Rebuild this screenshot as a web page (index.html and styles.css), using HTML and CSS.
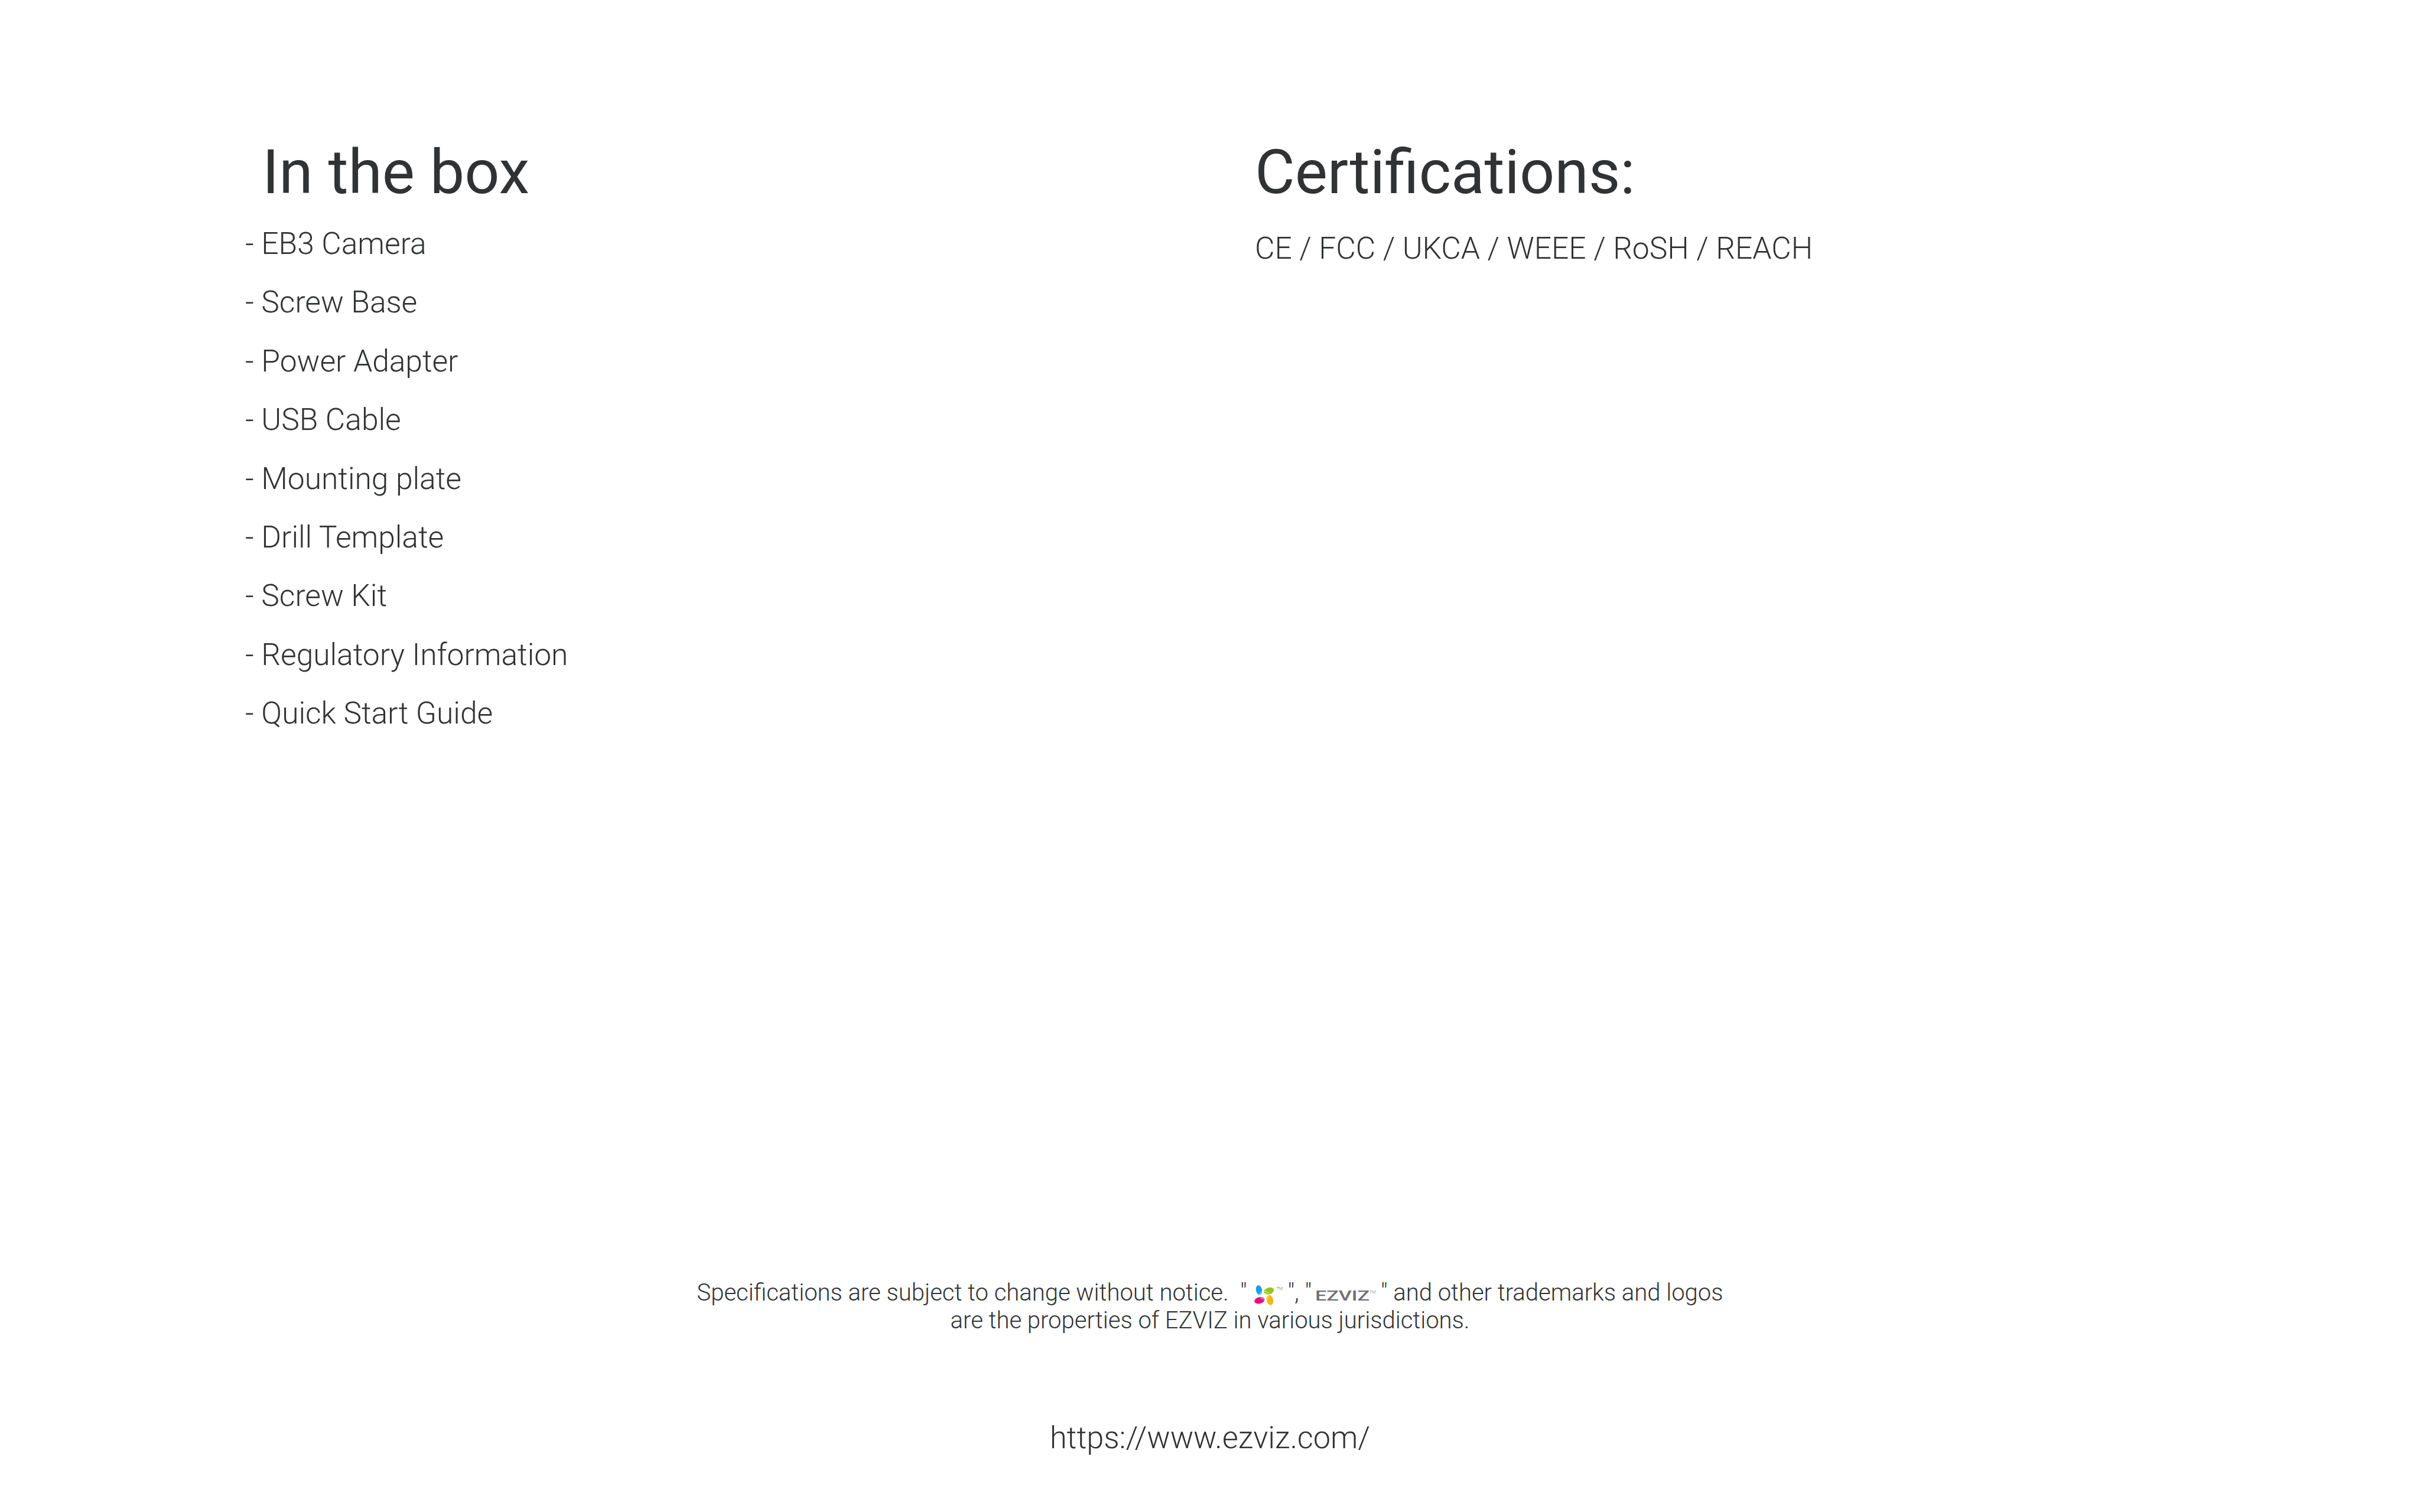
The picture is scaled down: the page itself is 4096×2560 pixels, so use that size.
FILE: index.html
```html
<!DOCTYPE html>
<html lang="en">
<head>
<meta charset="utf-8">
<title>In the box</title>
<link rel="stylesheet" href="styles.css">
</head>
<body>
<main class="page">
  <section class="columns">
    <div class="box">
      <h2 class="title title-box">In the box</h2>
      <ul class="list">
        <li>- EB3 Camera</li>
        <li>- Screw Base</li>
        <li>- Power Adapter</li>
        <li>- USB Cable</li>
        <li>- Mounting plate</li>
        <li>- Drill Template</li>
        <li>- Screw Kit</li>
        <li>- Regulatory Information</li>
        <li>- Quick Start Guide</li>
      </ul>
    </div>
    <div class="certs">
      <h2 class="title">Certifications:</h2>
      <p class="cert-text">CE / FCC / UKCA / WEEE / RoSH / REACH</p>
    </div>
  </section>
  <footer class="footer">
    <p class="note">Specifications are subject to change without notice. &nbsp;"<svg class="flower" viewBox="0 0 210 150"><ellipse cx="34" cy="35" rx="22" ry="35" fill="#1e9ee6" transform="rotate(-12 34 35)"/><ellipse cx="105" cy="42" rx="38" ry="24" fill="#97c31e" transform="rotate(-18 105 42)"/><ellipse cx="38" cy="110" rx="38" ry="24" fill="#e5127c" transform="rotate(-15 38 110)"/><ellipse cx="113" cy="108" rx="24" ry="37" fill="#f7b50f" transform="rotate(-15 113 108)"/><g fill="none" stroke="#fff" stroke-width="3.5"><path d="M40 72C42 54 52 42 68 38M52 74C52 63 58 54 69 50"/><path d="M68 46C84 40 98 46 106 64M70 60C80 55 90 59 96 70"/><path d="M34 86C50 80 66 88 74 106M46 96C54 93 62 98 66 106"/><path d="M100 74C104 88 98 106 86 116M90 72C92 84 88 94 82 102"/></g><text class="tm" x="162" y="36">TM</text></svg>", "<svg class="wordmark" viewBox="0 0 103 20"><text class="ezviz" x="0" y="19" transform="scale(1.38 1)">EZVIZ</text><text class="tm-grey" x="92" y="7">TM</text></svg>" and other trademarks and logos</p>
    <p class="note">are the properties of EZVIZ in various jurisdictions.</p>
    <p class="url">https://www.ezviz.com/</p>
  </footer>
</main>
</body>
</html>
```

FILE: styles.css
```css
* { box-sizing: border-box; }
html, body { margin: 0; padding: 0; background: #fff; }
body { font-family: Roboto, "Liberation Sans", sans-serif; color: #303233; }
.page { width: 4096px; height: 2560px; display: flex; flex-direction: column; overflow: hidden; }
.columns { display: grid; grid-template-columns: 1709px 1fr; padding: 222px 0 0 415px; }
.title { margin: 0; font-size: 104px; line-height: 140px; font-weight: 400; }
.title-box { padding-left: 29px; }
.list { list-style: none; margin: 1px 0 0; padding: 0; }
.list li { font-size: 51.5px; line-height: 99.4px; font-weight: 300; }
.cert-text { margin: 9px 0 0; font-size: 51.5px; line-height: 99.4px; font-weight: 300; }
.footer { margin-top: auto; padding-bottom: 93px; display: flex; flex-direction: column; align-items: center; }
.note { margin: 0; font-size: 40px; line-height: 47px; font-weight: 300; white-space: nowrap; }
.url { margin: 144px 0 0; font-size: 52.2px; line-height: 64px; font-weight: 300; }
.flower { width: 49px; height: 35px; vertical-align: -9px; margin: 0 8px 0 12px; overflow: visible; }
.wordmark { width: 103px; height: 20px; vertical-align: -1px; margin: 0 8px 0 6px; overflow: visible; }
.tm { font-size: 30px; fill: #666; font-family: Roboto, sans-serif; }
.ezviz { font-size: 24.7px; font-weight: 500; fill: #6e6e70; font-family: Roboto, sans-serif; }
.tm-grey { font-size: 7px; fill: #777; font-family: Roboto, sans-serif; }
```
